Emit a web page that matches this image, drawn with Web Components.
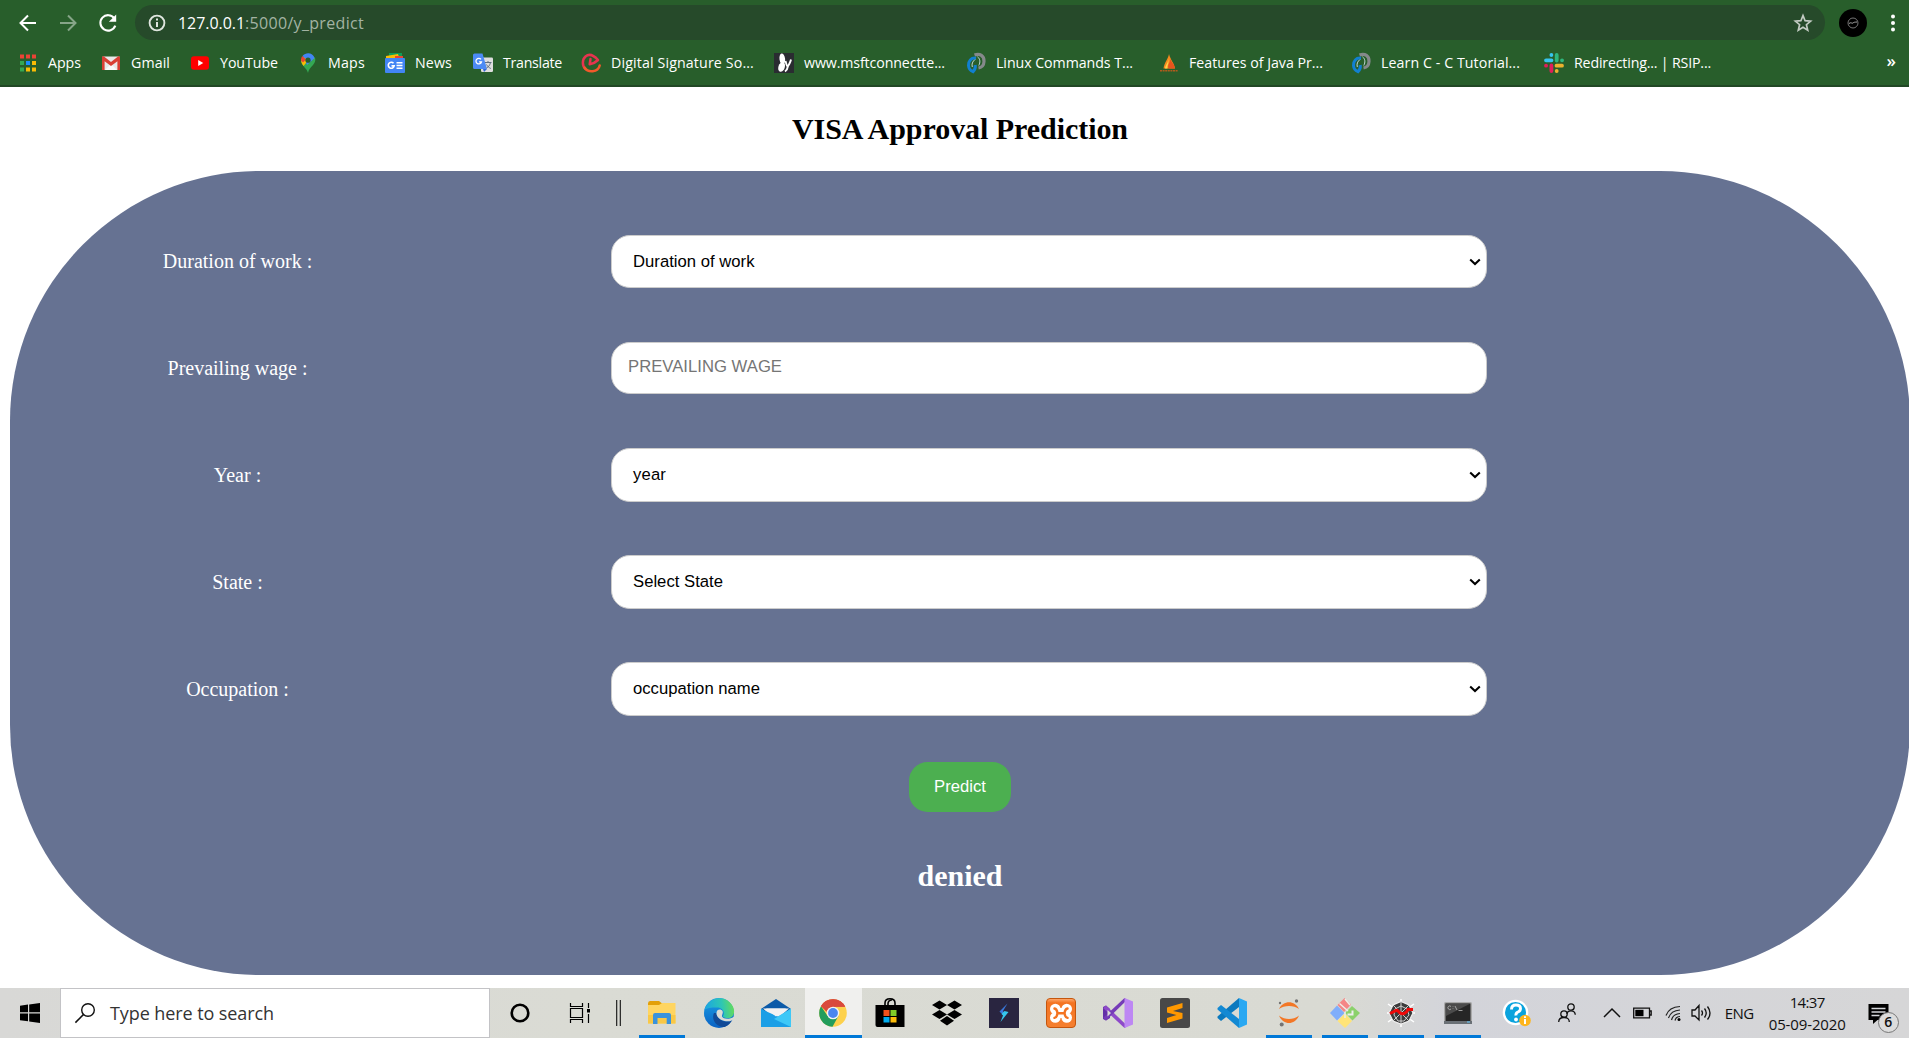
<!DOCTYPE html>
<html lang="en">
<head>
<meta charset="utf-8">
<title>VISA Approval Prediction</title>
<style>
html,body{margin:0;height:100%;overflow:hidden;background:#fff}
body{display:flex;flex-direction:column;height:1038px}
</style>
</head>
<body>
<browser-bar></browser-bar>
<visa-page></visa-page>
<task-bar></task-bar>
<script>
const ICONS = {
back:[20,20,'<path d="M18 10H3M10 2.5 2.5 10l7.5 7.5" fill="none" stroke="#fff" stroke-width="2"/>'],
forward:[20,20,'<path d="M2 10h15M10 2.5l7.500 7.500-7.500 7.500" fill="none" stroke="#86a588" stroke-width="2"/>'],
reload:[20,20,'<path d="M16.300 5.300A7.700 7.700 0 1 0 17.300 12.600" fill="none" stroke="#fff" stroke-width="2.100"/><path d="M18.200 1.500v7.300h-7.300z" fill="#fff"/>'],
info:[18,18,'<circle cx="9" cy="9" r="7.400" fill="none" stroke="#dfe5df" stroke-width="1.900"/><path d="M9 8v5M9 4.600v2" stroke="#dfe5df" stroke-width="2"/>'],
star:[20,20,'<path d="M10 2.600l2.100 5.100 5.500.400-4.200 3.600 1.300 5.400L10 14.200l-4.700 2.900 1.300-5.400-4.200-3.600 5.500-.400z" fill="none" stroke="#c3cbc3" stroke-width="1.700"/>'],
avatar:[28,28,'<circle cx="14" cy="14" r="14"/><circle cx="14" cy="14" r="5" fill="none" stroke="#777" stroke-width="1"/><path d="M10 14.500c2-1.800 3 .500 4-.500s2-.800 4-1" stroke="#aaa" fill="none"/>'],
dots:[6,20,'<g fill="#fff"><circle cx="3" cy="3.500" r="2"/><circle cx="3" cy="10" r="2"/><circle cx="3" cy="16.500" r="2"/></g>'],
apps:[20,20,'<g><path fill="#ea4335" d="M2 1.500h4v4H2zM8 1.500h4v4H8zM14 1.500h4v4h-4z"/><path fill="#34a853" d="M2 8h4v4H2zM2 14.500h4v4H2z"/><path fill="#1a8cff" d="M8 8h4v4H8z"/><path fill="#fbbc05" d="M14 8h4v4h-4zM8 14.500h4v4H8zM14 14.500h4v4h-4z"/></g>'],
gmail:[20,20,'<rect x="1" y="3.500" width="18" height="13.500" rx="1.200" fill="#e8e8e8"/><path d="M4 17l6-6 6 6z" fill="#fafafa"/><path d="M1 4.500v12.500h2.600V8.200L10 13l6.400-4.800V17H19V4.500c0-1-1.500-1.500-2.300-.800L10 9 3.300 3.700C2.500 3 1 3.500 1 4.500z" fill="#d93f34"/>'],
youtube:[20,20,'<rect x="1" y="3.300" width="18" height="13.400" rx="3" fill="#f00"/><path d="M8.200 7.100v5.800l5-2.900z" fill="#fff"/>'],
maps:[20,20,'<path d="M10 20C9.300 15.500 3 12.500 3 7.500l4-3 6 1 4-1c2 7-6 9-7 15.500z" fill="#34a853"/><path d="M3.200 6.500C3 9 4 11 5.500 13l4.500-5.500-4-4z" fill="#fbbc05"/><path d="M4.300 3 8 6.500 5 9.500 3.100 7.500c0-1.800.200-3.200 1.200-4.500z" fill="#ea4335"/><path d="M4.500 3C8-1.500 15-.500 16.600 5L9 12l-1-2.500V6z" fill="#4285f4"/><circle cx="10" cy="7.200" r="2.600" fill="#285e2b"/>'],
news:[20,20,'<path d="M4 0h13v6H4z" fill="#0f9d58"/><path d="M1 3l12-2 2 6H1z" fill="#fbbc05"/><path d="M10 3h8v4h-8z" fill="#ea4335"/><rect y="5" width="20" height="15" rx="1" fill="#4285f4"/><path d="M8.500 10.200a3 3 0 1 0 .700 2.700H6.500M11.500 9.800h6M11.500 12.500h6M11.500 15.200h6" stroke="#fff" stroke-width="1.600" fill="none"/>'],
translate:[20,20,'<rect x="8" y="4.500" width="12" height="14.500" rx="1.200" fill="#dedede"/><path d="M1.500.500h8L14 16H1.500A1.500 1.500 0 0 1 0 14.500V2A1.500 1.500 0 0 1 1.500.500z" fill="#4c8bf5"/><path d="M10 16h4l-3 3z" fill="#3367d6"/><path d="M8 6.400a2.800 2.800 0 1 0 .500 2.400H6" fill="none" stroke="#fff" stroke-width="1.300"/><path d="M12 9.500h6.500M15 8v1.500M17.500 9.500c-.500 2.500-2 4.500-4 5.500M13.500 11.500c1 1.800 2.300 3 4.300 4" stroke="#607080" fill="none"/>'],
digital:[20,20,'<path d="M4.500 16C1 13 1 6.500 4.500 3.500 7.500 1 12 1.500 17 7c-2 2-5 3.700-8.300 4.200L9.500 6" fill="none" stroke="#e8344f" stroke-width="2.500" stroke-linejoin="round" stroke-linecap="round"/><path d="M3.500 14.500c3.500 5.500 13.500 5 15.200-2" fill="none" stroke="#f2592a" stroke-width="2.500" stroke-linecap="round"/>'],
msft:[20,20,'<path d="M0 0h20v20H0z" fill="#2a2c31"/><ellipse cx="8.300" cy="6" rx="2.800" ry="5.500" fill="#fff" transform="rotate(-8 8.300 6)"/><ellipse cx="7.600" cy="14" rx="3.200" ry="5" fill="#fff" transform="rotate(18 7.600 14)"/><path d="M11.500 8c1 4 1.500 5.500 2 5.500S16.500 9 17 6.500M14 13c-.500 3-1.500 4.500-3 5.500" fill="none" stroke="#fff" stroke-width="1.900"/>'],
linux:[20,20,'<path d="M8.500 2C14 0 18.300 3 18 8.500c-.200 4-2.500 6-5.500 6.500" fill="none" stroke="#85898b" stroke-width="3.200"/><path d="M10 5.200C5 4.500 2.300 8.500 2.500 12.500c.200 3 1.500 5 4.500 6.200 2-2 2.700-4.200 2.200-6.700" fill="none" stroke="#1180d0" stroke-width="3"/><path d="M11.500 3.800c2.700 2 3 5.500 1.300 8.700M9 6.500C6.500 8.500 5.500 11 6.300 14" fill="none" stroke="#d5e8ee" stroke-width=".9"/>'],
flame:[20,20,'<path d="M10 1c-.500 4-5 9-5.500 14.500h11.500C15.500 10.500 11.500 7 10 1z" fill="#f58a1f"/><path d="M11 5c1 5-3 6-1.500 10.500h6.500C15.500 11 12 9 11 5z" fill="#e6541d"/><path d="M9 6c.500 4-2.500 5.500-3 9.500h2.500C8 12 10.500 10 9 6z" fill="#ffd24a"/><path d="M1 17.700h18" stroke="#b05b1c" stroke-width="1.600" stroke-dasharray="2 .6"/>'],
slack:[20,20,'<g stroke-width="3.800" stroke-linecap="round"><path d="M2 7.300h5.500M7.400 2v.100" stroke="#36c5f0"/><path d="M12.700 2v5.500M18 7.300h.100" stroke="#2eb67d"/><path d="M18 12.700h-5.500M12.700 18v.100" stroke="#ecb22e"/><path d="M7.400 18v-5.500M2 12.700h.100" stroke="#e01e5a"/></g>'],
chev:[12,8,'<path d="M1.200 1.500 6 6l4.800-4.500" fill="none" stroke="#000" stroke-width="2.100"/>'],
win:[20,20,'<path d="M0 2.800 8 1.600v7.700H0zM9.200 1.500 20 0v9.300H9.200zM0 10.500h8v7.800l-8-1.100zM9.200 10.500H20V20L9.200 18.500z"/>'],
search:[20,20,'<circle cx="13" cy="7" r="6.300" fill="none" stroke="#111" stroke-width="1.400"/><path d="M8.600 11.400.400 19.600" stroke="#111" stroke-width="1.500"/>'],
cortana:[20,20,'<circle cx="10" cy="10" r="8.300" fill="none" stroke="#000" stroke-width="2.600"/>'],
taskview:[20,20,'<path d="M.500 0v3.500h12V0M.500 5.500h12v9H.500zM.500 20v-3.500h12V20M18.500 0v5M18.500 11v9" fill="none" stroke="#000" stroke-width="1.200"/><path d="M17 6h3v3.500h-3z"/>'],
bars:[5,26,'<path d="M.700 0v26M4.300 0v26" stroke="#111" stroke-width="1.100"/>'],
folder:[30,30,'<path d="M1 5.500Q1 3 3 3h9l2.500 2h13v3H1z" fill="#e3a008"/><path d="M1 7h11l3-2h13.500v20.500H1z" fill="#ffd561"/><path d="M1 17h27.500v8.500H1z" fill="#f9c846"/><path d="M6 26V17q0-2 2-2h14q2 0 2 2v9h-4.300v-6H10.500v6z" fill="#3a93dc"/>'],
edge:[30,30,'<defs><linearGradient id="a" x1="0" y1=".5" x2="1" y2=".4"><stop stop-color="#1aa4e4"/><stop offset=".6" stop-color="#2ec6b4"/><stop offset="1" stop-color="#66dc58"/></linearGradient><linearGradient id="b" x1="0" y1="0" x2="0" y2="1"><stop stop-color="#1ba0e5"/><stop offset="1" stop-color="#0a62c4"/></linearGradient></defs><circle cx="15" cy="15" r="15" fill="url(#b)"/><path d="M.300 12C3 2 15-3 23.500 2.500 29 6 31 12 29.700 16c-1.500 5-8 5-11 2.500 3-4.500-.700-9.500-6.200-9C7 9.500 3 10 .300 12z" fill="url(#a)"/><path d="M10 15c-3 6 2 14.500 10.500 14 3.500-1.500 6-4 7.500-6.500-5 2-13 2-16-7.500z" fill="#114a97"/><path d="M12.500 15c0-4 4.500-4.500 6-2 1 2-.800 4-.500 5.500 1.500 2.500 7 3.500 12.500 0V21l-3 1.500C23 25 12.500 22 12.500 15z" fill="#dadbd5"/>'],
mail:[30,30,'<path d="M0 11 15 1l15 10-5 5H5z" fill="#0b5aa8"/><path d="M2 10.500h26L15 22z" fill="#f2f2f2"/><path d="M0 10.500 15 20 0 29z" fill="#1fa0e4"/><path d="M30 10.500 0 29h30z" fill="#38bdf3"/><path d="M15 20 30 29H0z" fill="#1597e0"/><path d="M0 11 18 19l12 10H0z" fill="#1b9fe6"/><path d="M30 11 13 21l17 8z" fill="#3ec8f7"/><path d="M5 10.500h20l-10 8z" fill="#f2f2f2"/>'],
chrome:[30,30,'<circle cx="15" cy="15" r="13.800" fill="#fdd14c"/><path d="M15 15 3 8.100A13.800 13.800 0 0 1 27.200 8.800H15z" fill="#d9493c"/><path d="M3 8.200A13.800 13.800 0 0 0 14.500 28.800L20.400 18 15 15 9.600 18z" fill="#229d5c"/><path d="M3 8.200A13.800 13.800 0 0 1 27.200 8.800H15A6.300 6.300 0 0 0 8.800 14z" fill="#d9493c"/><circle cx="15" cy="15" r="6.300" fill="#f3f3f3"/><circle cx="15" cy="15" r="4.900" fill="#4a86ee"/>'],
store:[30,30,'<path d="M10 8V5q0-4.300 5-4.300T20 5v3M13 8V5.500q0-3 4-3.800" fill="none" stroke="#000" stroke-width="1.600"/><path d="M.500 7h29v22H2.500q-2 0-2-2z"/><path d="M8.500 12h6v6h-6z" fill="#f1511b"/><path d="M15.500 12h6v6h-6z" fill="#80cc28"/><path d="M8.500 19h6v5.500h-6z" fill="#00adef"/><path d="M15.500 19h6v5.500h-6z" fill="#fbbc09"/>'],
dropbox:[30,30,'<path d="M7.500 2.500 15 7 7.500 11.600 0 7zM22.500 2.500 30 7l-7.500 4.600L15 7zM7.500 12l7.500 4.600L7.500 21 0 16.600zM22.500 12l7.500 4.600-7.500 4.400-7.500-4.400zM15 18l7 4.800-7 4.700-7-4.700z"/>'],
shazam:[30,30,'<path d="M0 0h30v30H0z" fill="#292540"/><path d="M18.500 5.500 10.500 13.500l3 3 2-1-1.500-2.500z" fill="#3978dc"/><path d="M15.500 13l4 1-8 10 2.500-6.500-1.500-1.500z" fill="#35c7ed"/>'],
xampp:[30,30,'<defs><linearGradient id="x" x1="0" y1="0" x2="0" y2="1"><stop stop-color="#ffad73"/><stop offset=".15" stop-color="#f47422"/><stop offset="1" stop-color="#f58030"/></linearGradient></defs><rect x=".5" y=".5" width="29" height="29" rx="3.500" fill="url(#x)" stroke="#c4560e"/><g fill="#fff"><circle cx="9.300" cy="11" r="5.300"/><circle cx="20.700" cy="11" r="5.300"/><circle cx="9.300" cy="19.500" r="5.300"/><circle cx="20.700" cy="19.500" r="5.300"/><path d="M7 10h16v10H7z"/></g><path d="M8.500 10.500q2.500.500 3 4.700-.500 4.200-3 4.700M21.500 10.500q-2.500.500-3 4.700.500 4.200 3 4.700M11.500 15.200h7" fill="none" stroke="#f47422" stroke-width="2.400" stroke-linecap="round"/>'],
vs:[30,30,'<path d="M0 9 3 7.500l4 3.500v9L3 22.500 0 21z" fill="#632fa7"/><path d="M3 7.500 24.500 28l-3 2L0 10z" fill="#8d49c9"/><path d="M3 22.500 24 2l-2.500-2L0 20z" fill="#753bb8"/><path d="M21.500 0 30 3.500v23L21.500 30z" fill="#bd87f3"/><path d="M4.500 12v6.500L8 15z" fill="#dadbd5"/>'],
sublime:[30,30,'<rect width="30" height="30" rx="2.500" fill="#484848"/><path d="M7 9.500 22.500 5v5L13 13l9.500 2v5.500L7 25v-5l9.500-3L7 14.500z" fill="#ff9800"/>'],
vscode:[30,30,'<path d="M22 0v9L4 23l-3.500-3v-1.500z" fill="#0b79be"/><path d="M22 30v-9L4 7 .500 10v1.500z" fill="#1389d3"/><path d="M22 0l8 3.500v23L22 30z" fill="#2aa8f2"/>'],
jupyter:[30,30,'<path d="M5 11C9 2 21 2 25 11 20 7 10 7 5 11zM5 17.500c4 10 16 10 20 0-5 4.500-15 4.500-20 0z" fill="#f37726"/><g fill="#747474"><circle cx="22.500" cy="3" r="1.700"/><circle cx="6" cy="5" r="1.200"/><circle cx="7.700" cy="26.500" r="2"/></g>'],
git:[30,30,'<path d="M14.500 0 21 6.500 14 14 7.500 7z" fill="#f48686"/><path d="M22 8l8 7-7.500 7.500L15 15z" fill="#8bd16b"/><path d="M7 7.500 14.500 15 7 22.500 0 15z" fill="#80aefb"/><path d="M15 15.500 22 23l-7 7-7.500-7z" fill="#ffe477"/><path d="M9.500 5.500 18 13M15 1l5 6M15 14v6" stroke="#eceee7" stroke-width="1.500"/><path d="M17.500 16.500h5v-4" stroke="#eee" stroke-width="2" fill="none"/>'],
spyder:[30,30,'<g stroke="#fff" stroke-width="1.500"><path d="M15 1v28M2 6l26 18M28 6 2 24M1 15h28" /></g><path d="M15 3.500 23 7l4 8-4 8-8 3-8-3-4-8 4-8z" fill="#3c3c3c" stroke="#eee" stroke-width="1.200"/><path d="M15 3v23M7 7l16 16M23 7 7 23M9 11l6-3 6 3 2 6-5 6h-6l-4-6z" stroke="#ddd" fill="none" stroke-width=".9"/><path d="M4 15.500 9 13q2-1.500 4 1t5 1.500q3-1 4-4h5" fill="none" stroke="#f00808" stroke-width="3"/>'],
cmd:[30,30,'<rect x="1" y="4" width="28" height="22" rx="1.500" fill="#aaa"/><path d="M2.500 5.500h25v17.500h-25z" fill="#262626"/><path d="M2.500 5.500h25L3 18z" fill="#4b4b4b"/><path d="M8 8.500a1.800 1.800 0 1 0 0 2.500M10 8v.500M10 10.500v.500M12 8l2 4M15.500 12.500h4" stroke="#bbb" fill="none" stroke-width=".8"/><path d="M1 23h28v3H1z" fill="#6a7076"/><path d="M24 24h3" stroke="#6cf"/>'],
help:[30,30,'<circle cx="13.500" cy="14.500" r="12.800" fill="#fff"/><circle cx="13.500" cy="14.500" r="10.500" fill="#0aa3dd"/><path d="M9.500 11.500q0-4.500 4.500-4.500t4.500 3.500q0 2.500-2.500 3.500t-2 3.500" fill="none" stroke="#fff" stroke-width="2.900"/><circle cx="14" cy="21.500" r="1.900" fill="#fff"/><circle cx="23" cy="22.500" r="5.800" fill="#fdb51e"/><path d="M23 21v5M23 18.300v1.700" stroke="#fff" stroke-width="2"/>'],
people:[18,20,'<g fill="none" stroke="#111" stroke-width="1.300"><circle cx="13" cy="4" r="3.200"/><path d="M9 11q0-3.200 4-3.200t4.300 4"/><circle cx="6" cy="11" r="3.200"/><path d="M.700 19q0-4.500 5.300-4.500t5.300 4.500"/></g>'],
up:[18,10,'<path d="M1 9 9 1l8 8" fill="none" stroke="#111" stroke-width="1.500"/>'],
battery:[19,12,'<path d="M.700 1.200h15.800v9.600H.700zM16.500 4h1.700v4h-1.700" fill="none" stroke="#111" stroke-width="1.300"/><path d="M2.300 2.800h8.200v6.400H2.300z"/>'],
wifi:[16,16,'<g fill="none" stroke="#222" stroke-width="1.200"><path d="M1 10.500Q4 2 15 1.500M3.500 13Q6 5.500 15 5M6.500 15Q8 9 15 8.500M10 15.500q1-4 5-4"/></g><circle cx="14" cy="14.500" r="1.500"/>'],
sound:[21,18,'<g fill="none" stroke="#111" stroke-width="1.300"><path d="M1 6h3l4-4.500v14.500L4 12H1zM10.500 6.500q2 2.500 0 5M13.500 4.500q3.500 4.500 0 9M16.500 2.500q5 6.500 0 13"/></g>'],
notify:[21,20,'<path d="M.500 0h20v16h-11L5 20v-4H.500z"/><path d="M3.500 4.500h14M3.500 8h14M3.500 11.500h8" stroke="#d4d5d9" stroke-width="1.300"/>']
};

class UiIcon extends HTMLElement{
  connectedCallback(){
    const [w,h,body]=ICONS[this.getAttribute('name')];
    this.attachShadow({mode:'open'}).innerHTML=`<style>:host{display:block;flex:none;width:${w}px;height:${h}px}svg{display:block;overflow:visible}</style><svg width="${w}" height="${h}" viewBox="0 0 ${w} ${h}">${body}</svg>`;
  }
}

/* One line of text whose tracking is adjusted to fill the width in its "w" attribute. */
class FitText extends HTMLElement{
  connectedCallback(){
    const w=+this.getAttribute('w');
    const r=this.attachShadow({mode:'open'});
    r.innerHTML=`<style>:host{display:block;flex:none;white-space:pre;width:${w}px}</style><span><slot></slot></span>`;
    const s=r.querySelector('span');
    const now=s.getBoundingClientRect().width;
    s.style.letterSpacing=((w-now)/this.textContent.length)+'px';
  }
}

class BookmarkLink extends HTMLElement{
  connectedCallback(){
    const g=n=>this.getAttribute(n);
    this.attachShadow({mode:'open'}).innerHTML=`<style>:host{display:flex;flex:none;align-items:center;gap:10px;width:${g('pitch')}px;color:#fff;font:14.2px/20px "Open Sans",sans-serif}</style><ui-icon name="${g('icon')}"></ui-icon><fit-text w="${g('w')}">${this.dataset.label}</fit-text>`;
  }
}

class BrowserBar extends HTMLElement{
  connectedCallback(){
    const marks=[['apps','Apps',33,83],['gmail','Gmail',39,89],['youtube','YouTube',58,108],['maps','Maps',37,87],['news','News',37,88],['translate','Translate',59,108],['digital','Digital Signature So...',143,193],['msft','www.msftconnectte...',141,192],['linux','Linux Commands T...',137,193],['flame','Features of Java Pr...',134,192],['linux','Learn C - C Tutorial...',139,193],['slack','Redirecting... | RSIP...',137,200]];
    this.attachShadow({mode:'open'}).innerHTML=`<style>
    :host{display:flex;flex-direction:column;flex:none;height:87px;box-sizing:border-box;background:#285e2b;border-bottom:2px solid #214725;font-family:"Open Sans",sans-serif}
    .nav{display:flex;height:35px;margin-top:5px;align-items:center;padding-left:18px}
    .nav>ui-icon{margin-right:20px}
    .omni{display:flex;align-items:center;width:1690px;height:35px;box-sizing:border-box;border-radius:18px;background:#264a2a;padding:0 12px 0 13px;margin:0 14px 0 -3px;color:#fff;font-size:16px;line-height:22px}
    .omni fit-text:first-of-type{margin-left:12px}
    .path{color:#a3b3a3}.grow{flex:1}
    .nav>ui-icon.av{margin-right:23px}.nav>ui-icon.d{margin:0}
    .marks{display:flex;align-items:center;height:45px;padding-left:18px}
    .more{margin-left:auto;margin-right:13px;color:#fff;font-size:17px;line-height:20px;padding-bottom:3px;font-weight:600}
    </style>
    <div class="nav"><ui-icon name="back"></ui-icon><ui-icon name="forward"></ui-icon><ui-icon name="reload"></ui-icon>
    <div class="omni"><ui-icon name="info"></ui-icon><fit-text w="67">127.0.0.1</fit-text><fit-text class="path" w="119">:5000/y_predict</fit-text><span class="grow"></span><ui-icon name="star"></ui-icon></div>
    <ui-icon class="av" name="avatar"></ui-icon><ui-icon class="d" name="dots"></ui-icon></div>
    <div class="marks">${marks.map(m=>`<bookmark-link icon="${m[0]}" data-label="${m[1]}" w="${m[2]}" pitch="${m[3]}"></bookmark-link>`).join('')}<span class="more">»</span></div>`;
  }
}

class FormRow extends HTMLElement{
  connectedCallback(){
    const input=this.hasAttribute('input');
    const h=this.getAttribute('h');
    this.attachShadow({mode:'open'}).innerHTML=`<style>
    :host{display:flex;flex:none;height:${h}px;align-items:center}
    .label{width:455px;text-align:center;color:#fff;font:20px/24px "Liberation Serif",serif;margin-right:146px;padding-bottom:1px}
    .field{display:flex;align-items:center;justify-content:space-between;box-sizing:border-box;width:876px;height:${h}px;background:#fff;border:1px solid #ccc;border-radius:18.750px;padding:0 5px ${input?2:0}px ${input?16:21}px;font:16.670px/20px "Liberation Sans",sans-serif;color:${input?'#757575':'#000'}}
    </style><div class="label"><slot></slot></div><div class="field"><fit-text w="${this.getAttribute('w')}">${this.getAttribute('value')}</fit-text>${input?'':'<ui-icon name="chev"></ui-icon>'}</div>`;
  }
}

class VisaPage extends HTMLElement{
  connectedCallback(){
    this.attachShadow({mode:'open'}).innerHTML=`<style>
    :host{display:flex;flex-direction:column;flex:none;height:901px;box-sizing:border-box;padding-left:10px;background:#fff;font-family:"Liberation Serif",serif}
    h1{display:flex;justify-content:center;margin:0 -1px 0 0;height:84px;box-sizing:border-box;padding-top:25px;font-size:30px;line-height:34px}
    .panel{display:flex;flex-direction:column;height:804px;box-sizing:border-box;background:#667292;border-radius:250px;padding-top:64px;margin-right:-1px}
    .rows{display:flex;flex-direction:column;gap:53px}
    .rows :nth-child(2){margin:1px 0}
    .btn{align-self:center;display:flex;justify-content:center;align-items:center;width:102px;height:50px;box-sizing:border-box;border-radius:18.750px;background:#4caf50;color:#fff;font:16.670px/20px "Liberation Sans",sans-serif;margin-top:46px}
    h2{display:flex;justify-content:center;margin:47px 0 0;color:#fff;font-size:30px;line-height:34px}
    </style>
    <h1><fit-text w="336">VISA Approval Prediction</fit-text></h1>
    <div class="panel"><div class="rows">
    <form-row value="Duration of work" w="121.500" h="53">Duration of work :</form-row>
    <form-row input value="PREVAILING WAGE" w="154" h="52">Prevailing wage :</form-row>
    <form-row value="year" w="33" h="54">Year :</form-row>
    <form-row value="Select State" w="90" h="54">State :</form-row>
    <form-row value="occupation name" w="127" h="54">Occupation :</form-row>
    </div>
    <div class="btn">Predict</div>
    <h2><fit-text w="85">denied</fit-text></h2>
    </div>`;
  }
}

class TaskApp extends HTMLElement{
  connectedCallback(){
    this.attachShadow({mode:'open'}).innerHTML=`<style>
    :host{display:flex;flex:none;flex-direction:column;align-items:center;width:${this.getAttribute('w')}px;height:50px;box-sizing:border-box;padding-top:10px;justify-content:space-between}
    :host([active]){background:#f0f0ee}
    i{display:block;width:46px;height:3px}
    :host([open]) i{background:#0078d7}
    :host([active]) i{width:100%}
    </style><ui-icon name="${this.getAttribute('icon')}"></ui-icon><i></i>`;
  }
}

class TaskBar extends HTMLElement{
  connectedCallback(){
    const open=['folder','chrome','jupyter','git','spyder','cmd'];
    const widths={jupyter:56.3,git:56.3,spyder:56.3,cmd:56.3,help:62};
    const apps=['folder','edge','mail','chrome','store','dropbox','shazam','xampp','vs','sublime','vscode','jupyter','git','spyder','cmd','help'];
    this.attachShadow({mode:'open'}).innerHTML=`<style>
    :host{display:flex;flex:none;align-items:center;height:50px;background:linear-gradient(90deg,#d8d8d6,#dadbd4 30%,#d9dad3 70%,#d3d4da 76%,#d6d6d7 100%);color:#111;font-family:"Open Sans",sans-serif}
    .start{display:flex;justify-content:center;width:60px}
    .search{display:flex;align-items:center;width:430px;height:50px;box-sizing:border-box;border:1px solid #c3c3c6;background:#fff;padding-left:14px;gap:15px;font-size:18px;line-height:26px;color:#333}
    .mid{display:flex;align-items:center;width:143.500px}
    .mid>:nth-child(1){margin-left:20px}.mid>:nth-child(2){margin-left:40px}.mid>:nth-child(3){margin-left:25.500px}
    .apps{display:flex}
    .tray{display:flex;align-items:center;font-size:15px;line-height:22px}
    .clock{display:flex;flex-direction:column;align-items:center;width:77px;margin-left:15px}
    .note{display:flex;margin-left:22px;padding-top:1px;position:relative}
    .badge{position:absolute;left:10px;top:9px;width:21px;height:21px;box-sizing:border-box;border:1px solid #777;border-radius:50%;background:#dcdcdc;text-align:center;font:600 14px/18px "Open Sans",sans-serif}
    </style>
    <div class="start"><ui-icon name="win"></ui-icon></div>
    <div class="search"><ui-icon name="search"></ui-icon><fit-text w="164">Type here to search</fit-text></div>
    <div class="mid"><ui-icon name="cortana"></ui-icon><ui-icon name="taskview"></ui-icon><ui-icon name="bars"></ui-icon></div>
    <div class="apps">${apps.map(a=>`<task-app icon="${a}" w="${widths[a]||57}" ${open.includes(a)?'open':''} ${a==='chrome'?'active':''}></task-app>`).join('')}</div>
    <div class="tray"><ui-icon name="people" style="margin-left:10px"></ui-icon><ui-icon name="up" style="margin-left:27px"></ui-icon><ui-icon name="battery" style="margin-left:12px"></ui-icon><ui-icon name="wifi" style="margin-left:13px"></ui-icon><ui-icon name="sound" style="margin-left:10px"></ui-icon><fit-text w="29" style="margin-left:13px">ENG</fit-text>
    <div class="clock"><fit-text w="35">14:37</fit-text><fit-text w="77">05-09-2020</fit-text></div>
    <div class="note"><ui-icon name="notify"></ui-icon><span class="badge">6</span></div></div>`;
  }
}
customElements.define('browser-bar',BrowserBar);
customElements.define('bookmark-link',BookmarkLink);
customElements.define('visa-page',VisaPage);
customElements.define('form-row',FormRow);
customElements.define('task-bar',TaskBar);
customElements.define('task-app',TaskApp);
customElements.define('ui-icon',UiIcon);
customElements.define('fit-text',FitText);
</script>
</body>
</html>
